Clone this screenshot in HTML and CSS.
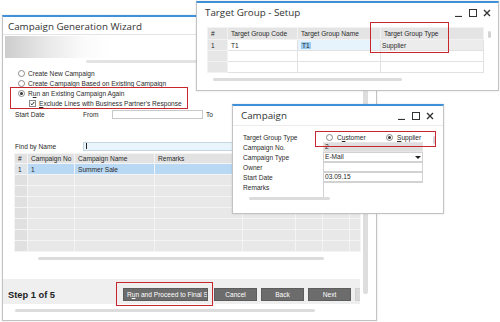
FILE: index.html
```html
<!DOCTYPE html>
<html lang="en">
<head>
<meta charset="utf-8">
<title>Campaign Generation Wizard</title>
<link rel="stylesheet" href="styles.css">
</head>
<body>
<div class="desk">

  <section class="win wizard">
    <header class="wtitle">Campaign Generation Wizard</header>
    <div class="wbody">
      <div class="wmain">
        <div class="banner"></div>
        <div class="strip"></div>
        <ul class="opts">
          <li class="opt"><span class="radio"></span><span>Create New Campaign</span></li>
          <li class="opt"><span class="radio"></span><span>Create Campaign Based on Existing Campaign</span></li>
          <li class="opt"><span class="radio on"></span><span>R<u>u</u>n an Existing Campaign Again</span></li>
          <li class="opt sub"><span class="check"><svg width="7" height="7" viewBox="0 0 7 7"><path d="M1 3.6L2.8 5.4L6 1.3" fill="none" stroke="#222" stroke-width="1.3"/></svg></span><span><u>E</u>xclude Lines with Business Partner's Response</span></li>
        </ul>
        <div class="daterow">
          <span class="lbl">Start Date</span>
          <span class="from">From</span>
          <span class="field date"></span>
          <span class="to">To</span>
        </div>
        <div class="findrow">
          <span class="lbl">Find by Name</span>
          <span class="field find"><span class="caret"></span></span>
        </div>
        <table class="grid wgrid">
          <colgroup><col class="c1"><col class="c2"><col class="c3"><col class="c4"><col class="c5"><col class="c6"><col class="c7"><col class="c8"></colgroup>
          <tr class="head"><td>#</td><td>Campaign No</td><td>Campaign Name</td><td>Remarks</td><td></td><td></td><td></td><td></td></tr>
          <tr class="sel"><td class="num">1</td><td>1</td><td>Summer Sale</td><td></td><td></td><td></td><td></td><td></td></tr>
          <tr><td class="num"></td><td></td><td></td><td></td><td></td><td></td><td></td><td></td></tr>
          <tr><td class="num"></td><td></td><td></td><td></td><td></td><td></td><td></td><td></td></tr>
          <tr><td class="num"></td><td></td><td></td><td></td><td></td><td></td><td></td><td></td></tr>
          <tr><td class="num"></td><td></td><td></td><td></td><td></td><td></td><td></td><td></td></tr>
          <tr><td class="num"></td><td></td><td></td><td></td><td></td><td></td><td></td><td></td></tr>
          <tr><td class="num"></td><td></td><td></td><td></td><td></td><td></td><td></td><td></td></tr>
          <tr><td class="num"></td><td></td><td></td><td></td><td></td><td></td><td></td><td></td></tr>
        </table>
        <div class="hbar wh1"></div>
        <footer class="wfoot">
          <strong class="step">Step 1 of 5</strong>
          <div class="btns">
            <button class="btn run">R<u>u</u>n and Proceed to Final S</button>
            <button class="btn">Cancel</button>
            <button class="btn">Back</button>
            <button class="btn">Next</button>
            <span class="btn ghost"></span>
          </div>
        </footer>
        <div class="hbar wh2"></div>
      </div>
      <div class="vbar"></div>
    </div>
  </section>

  <section class="win target">
    <header class="ttl">
      <span class="ttext">Target Group - Setup</span>
      <span class="ctrls">
        <svg width="8" height="8" viewBox="0 0 8 8"><path d="M0 7.5H7" stroke="#333" stroke-width="1.2"/></svg>
        <svg width="8" height="8" viewBox="0 0 8 8"><rect x="0.5" y="0.5" width="7" height="7" fill="none" stroke="#333"/></svg>
        <svg width="8" height="8" viewBox="0 0 8 8"><path d="M1 1L7 7M7 1L1 7" stroke="#333" stroke-width="1.4"/></svg>
      </span>
    </header>
    <div class="tbody">
      <table class="grid tgrid">
        <colgroup><col class="t1"><col class="t2"><col class="t3"><col class="t4"></colgroup>
        <tr class="head"><td>#</td><td>Target Group Code</td><td>Target Group Name</td><td>Target Group Type</td></tr>
        <tr><td class="num">1</td><td>T1</td><td class="edit"><span class="hl">T1</span></td><td class="ro">Supplier</td></tr>
        <tr><td class="num"></td><td></td><td></td><td></td></tr>
        <tr><td class="num"></td><td></td><td></td><td></td></tr>
      </table>
      <div class="vthumb"></div>
    </div>
    <div class="hbar th"></div>
  </section>

  <section class="win campaign">
    <header class="ttl">
      <span class="ttext">Campaign</span>
      <span class="ctrls">
        <svg width="8" height="8" viewBox="0 0 8 8"><path d="M0 7.5H7" stroke="#333" stroke-width="1.2"/></svg>
        <svg width="8" height="8" viewBox="0 0 8 8"><rect x="0.5" y="0.5" width="7" height="7" fill="none" stroke="#333"/></svg>
        <svg width="8" height="8" viewBox="0 0 8 8"><path d="M1 1L7 7M7 1L1 7" stroke="#333" stroke-width="1.4"/></svg>
      </span>
    </header>
    <div class="cbody">
      <div class="form">
        <span class="flbl">Target Group Type</span>
        <div class="fval radios">
          <span class="ropt"><span class="radio"></span><span>C<u>u</u>stomer</span></span>
          <span class="ropt"><span class="radio on"></span><span><u>S</u>upplier</span></span>
        </div>
        <span class="flbl">Campaign No.</span>
        <div class="fval box gray">2</div>
        <span class="flbl">Campaign Type</span>
        <div class="fval box combo"><span>E-Mail</span><span class="arrow"></span></div>
        <span class="flbl">Owner</span>
        <div class="fval box"></div>
        <span class="flbl">Start Date</span>
        <div class="fval box">03.09.15</div>
        <span class="flbl">Remarks</span>
        <div class="fval memo"></div>
      </div>
      <div class="vthumb small"></div>
    </div>
    <div class="hbar ch"></div>
  </section>

  <div class="mark m-opts"></div>
  <div class="mark m-run"></div>
  <div class="mark m-type"></div>
  <div class="mark m-radio"></div>
</div>
</body>
</html>
```

FILE: styles.css
```css
* { box-sizing: border-box; }

body {
  margin: 0;
  background: #fff;
  font-family: "Liberation Sans", Arial, sans-serif;
  font-size: 6.6px;
  color: #2a2a2a;
}

.desk {
  position: relative;
  width: 500px;
  height: 322px;
  overflow: hidden;
}

/* windows on the desktop */
.win {
  position: absolute;
  display: flex;
  flex-direction: column;
  background: #fff;
  border: 1px solid #c2c2c2;
  border-top: 2px solid #3f90d9;
  box-shadow: 0 0 2px rgba(0, 0, 0, 0.12);
  overflow: hidden;
}

.wizard { left: 2px; top: 15px; width: 375px; height: 306px; z-index: 1; }
.target { left: 196px; top: 1px; width: 303px; height: 90px; z-index: 2; }
.campaign { left: 232px; top: 104px; width: 212px; height: 110px; z-index: 3; }

.wtitle,
.ttext {
  font-family: "Open Sans", "Noto Sans", sans-serif;
  font-size: 9.8px;
  color: #333;
}

.wtitle {
  height: 18px;
  line-height: 19px;
  padding-left: 5px;
  border-bottom: 1px solid #e4e4e4;
}

.wbody { display: flex; }
.wmain { width: 357px; display: flex; flex-direction: column; }

.banner {
  margin: 1px 0 0 2px;
  height: 22px;
  width: 355px;
  background: linear-gradient(to right, #cdcdcd 0%, #e9e9e9 12%, #fafafa 22%, #fff 30%);
}

.strip {
  margin: 2px 0 0 83px;
  width: 276px;
  height: 3px;
  background: #e3e3e3;
  border-radius: 2px;
}

.opts {
  list-style: none;
  margin: 5px 0 0;
  padding: 0 0 0 15px;
}

.opt {
  display: flex;
  align-items: center;
  height: 10px;
  gap: 3px;
}

.opt.sub { padding-left: 11px; }

.radio {
  width: 7px;
  height: 7px;
  border: 1px solid #8a8a8a;
  border-radius: 50%;
  background: #fff;
  display: inline-flex;
  align-items: center;
  justify-content: center;
  flex: none;
}

.radio.on::after {
  content: "";
  width: 3px;
  height: 3px;
  border-radius: 50%;
  background: #333;
}

.check {
  width: 7px;
  height: 7px;
  border: 1px solid #8a8a8a;
  background: #fff;
  display: inline-flex;
  align-items: center;
  justify-content: center;
  flex: none;
}

.check svg { display: block; }

.daterow,
.findrow {
  display: flex;
  align-items: center;
  height: 10px;
  margin-top: 1px;
  padding-left: 12px;
}

.findrow { margin-top: 22px; }

.lbl { width: 68px; flex: none; }
.from { width: 29px; flex: none; }

.field {
  height: 9px;
  border: 1px solid #c9c9c9;
  background: #fff;
}

.field.date { width: 91px; }
.to { margin-left: 3px; }

.field.find {
  width: 277px;
  background: #eaf4fb;
  border-color: #c5d6e3;
  display: flex;
  align-items: center;
  padding-left: 2px;
}

.caret { width: 1px; height: 6px; background: #222; }

/* grids */
.grid {
  border-collapse: collapse;
  table-layout: fixed;
}

.grid td {
  padding: 0 0 0 3px;
  white-space: nowrap;
  overflow: hidden;
  border: 1px solid #f4f4f4;
}

.wgrid {
  margin: 2px 0 0 11px;
  width: 346px;
}

.wgrid td { height: 11px; background: #e8e8e8; }
.wgrid tr.head td { height: 10px; background: #e2e2e2; }
.wgrid td.num { background: #e0e0e0; }
.wgrid tr.sel td { background: #b9d8f3; }
.wgrid tr.sel td.num { background: #dfe4e8; }

.c1 { width: 13px; } .c2 { width: 47px; } .c3 { width: 80px; } .c4 { width: 88px; }
.c5 { width: 53px; } .c6 { width: 27px; } .c7 { width: 27px; } .c8 { width: 11px; }

.hbar {
  height: 3px;
  background: #dcdcdc;
  border-radius: 2px;
}

.wh1 { margin: 5px 0 0 35px; width: 286px; }
.wh2 { margin: 5px 0 0 12px; width: 300px; }

.wfoot {
  margin-top: 19px;
  height: 25px;
  background: #efefef;
  display: grid;
  grid-template-columns: 115px auto;
  align-items: end;
  padding: 0 0 3px 5px;
  overflow: hidden;
}

.step {
  font-size: 9.3px;
  color: #222;
  line-height: 11px;
}

.btns { display: flex; gap: 4px; }

.btn {
  height: 13px;
  width: 43px;
  padding: 0;
  margin: 0;
  border: 1px solid #5d5d5d;
  background: #6c6c6c;
  color: #fff;
  font: 6.6px "Liberation Sans", Arial, sans-serif;
  text-align: center;
  flex: none;
}

.btn.run {
  width: 85px;
  margin-right: 2px;
  text-align: left;
  padding-left: 3px;
  white-space: nowrap;
  overflow: hidden;
}

.btn.ghost { background: #dadada; border-color: #d0d0d0; }

.vbar {
  margin: 25px 0 0 3px;
  width: 5px;
  height: 234px;
  background: #dedede;
  border-radius: 2px;
}

/* title bars of the small windows */
.ttl {
  display: flex;
  align-items: center;
  justify-content: space-between;
  flex: none;
}

.ctrls { display: flex; gap: 6px; align-items: center; }
.ctrls svg { display: block; }

.target .ttl { height: 19px; padding: 0 7px 0 8px; }

.tbody { display: flex; margin-top: 5px; }

.tgrid { margin-left: 10px; width: 276px; }
.tgrid td { height: 11px; background: #fff; border-color: #e2e2e2; }
.tgrid tr.head td { height: 12px; background: #e4e4e4; border-color: #f2f2f2; }
.tgrid td.num { background: #e6e6e6; border-color: #f2f2f2; }
.tgrid td.edit { background: #e6f3fc; }
.tgrid td.ro { background: #ececec; padding-left: 1px; }
.hl { background: #9ccbef; padding: 0 1px; }

.t1 { width: 20px; } .t2 { width: 70px; } .t3 { width: 83px; } .t4 { width: 103px; }

.vthumb {
  width: 3px;
  height: 7px;
  margin: 4px 0 0 4px;
  background: #d4d4d4;
  border-radius: 2px;
}

.th { margin: 5px 0 0 16px; width: 189px; }

.campaign .ttl { height: 20px; padding: 0 9px 0 8px; border-bottom: 1px solid #ececec; }

.cbody { display: flex; margin-top: 6px; }

.form {
  display: grid;
  grid-template-columns: 80px 100px;
  grid-auto-rows: 10px;
  align-items: center;
  padding-left: 10px;
}

.fval { height: 10px; }

.radios { display: flex; align-items: center; }
.ropt { display: flex; align-items: center; gap: 4px; }
.ropt:first-child { width: 63px; padding-left: 3px; }

.box {
  border: 1px solid #d2d2d2;
  background: #fff;
  padding-left: 1px;
  line-height: 8px;
}

.box.gray { background: #dedede; border-color: #e6e6e6; }

.combo { display: flex; justify-content: space-between; align-items: center; padding-right: 1px; }

.arrow {
  width: 0;
  height: 0;
  border-left: 3px solid transparent;
  border-right: 3px solid transparent;
  border-top: 3px solid #222;
}

.memo {
  height: 15px;
  align-self: start;
  border-left: 1px solid #d2d2d2;
  border-top: 1px solid #d2d2d2;
}

.vthumb.small { margin: 4px 0 0 10px; height: 8px; }

.ch { margin: 5px 0 0 16px; width: 81px; }

/* red annotation frames lying over the screenshot */
.mark {
  position: absolute;
  border: 1.5px solid #c9252d;
  z-index: 5;
}

.m-opts { left: 10px; top: 87px; width: 178px; height: 22px; }
.m-run { left: 116px; top: 282px; width: 97px; height: 24px; }
.m-type { left: 370px; top: 22px; width: 79px; height: 31px; }
.m-radio { left: 315px; top: 131px; width: 121px; height: 16px; }
```
